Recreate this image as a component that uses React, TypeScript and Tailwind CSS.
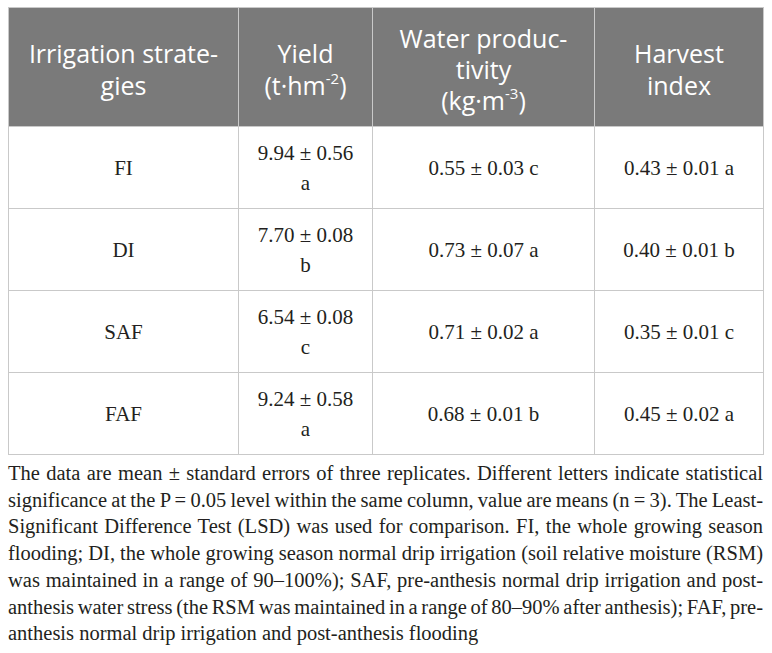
const ROWS = [
  { name: "FI", yield: "9.94 ± 0.56", yl: "a", wp: "0.55 ± 0.03 c", hi: "0.43 ± 0.01 a" },
  { name: "DI", yield: "7.70 ± 0.08", yl: "b", wp: "0.73 ± 0.07 a", hi: "0.40 ± 0.01 b" },
  { name: "SAF", yield: "6.54 ± 0.08", yl: "c", wp: "0.71 ± 0.02 a", hi: "0.35 ± 0.01 c" },
  { name: "FAF", yield: "9.24 ± 0.58", yl: "a", wp: "0.68 ± 0.01 b", hi: "0.45 ± 0.02 a" },
];

// caption lines broken the same way as the printed table footnote
const NOTE = [
  "The data are mean ± standard errors of three replicates. Different letters indicate statistical",
  "significance at the P = 0.05 level within the same column, value are means (n = 3). The Least-",
  "Significant Difference Test (LSD) was used for comparison. FI, the whole growing season",
  "flooding; DI, the whole growing season normal drip irrigation (soil relative moisture (RSM)",
  "was maintained in a range of 90–100%); SAF, pre-anthesis normal drip irrigation and post-",
  "anthesis water stress (the RSM was maintained in a range of 80–90% after anthesis); FAF, pre-",
];

export default function App() {
  return (
    <div className="w-[772px] h-[653px] bg-white overflow-hidden pt-[7px] px-[8px]">
      <table className="w-[755px] table-fixed border-collapse">
        <colgroup>
          <col className="w-[230px]" />
          <col className="w-[134px]" />
          <col className="w-[222px]" />
          <col className="w-[169px]" />
        </colgroup>
        <thead>
          <tr className="h-[119px] bg-[#7a7a7a] text-white text-[25px] leading-[32px] font-['Open_Sans',sans-serif]">
            <th className="border border-[#c9c9c9] font-normal text-center align-middle pt-[4px]">
              Irrigation strate-
              <br />
              gies
            </th>
            <th className="border border-[#c9c9c9] font-normal text-center align-middle pt-[4px]">
              Yield
              <br />
              (t·hm<sup className="text-[15px] relative -top-[11px] align-baseline">-2</sup>)
            </th>
            <th className="border border-[#c9c9c9] font-normal text-center align-middle leading-[31px] pt-[4px]">
              Water produc-
              <br />
              tivity
              <br />
              (kg·m<sup className="text-[15px] relative -top-[11px] align-baseline">-3</sup>)
            </th>
            <th className="border border-[#c9c9c9] font-normal text-center align-middle pt-[4px]">
              Harvest
              <br />
              index
            </th>
          </tr>
        </thead>
        <tbody className="text-[21px] leading-[30px] text-[#231f20] font-['Liberation_Serif',serif]">
          {ROWS.map((r) => (
            <tr key={r.name} className="h-[82px]">
              <td className="border border-[#c9c9c9] text-center align-middle">{r.name}</td>
              <td className="border border-[#c9c9c9] text-center align-middle">
                {r.yield}
                <br />
                {r.yl}
              </td>
              <td className="border border-[#c9c9c9] text-center align-middle">{r.wp}</td>
              <td className="border border-[#c9c9c9] text-center align-middle">{r.hi}</td>
            </tr>
          ))}
        </tbody>
      </table>
      <div className="mt-[5px] w-[755px] text-[20.5px] leading-[26.7px] text-[#231f20] font-['Liberation_Serif',serif]">
        {NOTE.map((line, i) => (
          <div key={i} className="text-justify [text-align-last:justify] whitespace-nowrap [word-spacing:-2.5px]">
            {line}
          </div>
        ))}
        <div>anthesis normal drip irrigation and post-anthesis flooding</div>
      </div>
    </div>
  );
}
